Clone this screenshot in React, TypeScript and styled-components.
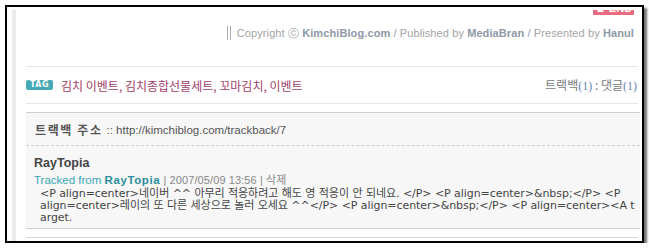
import React from "react";
import styled, { createGlobalStyle } from "styled-components";

const GlobalStyle = createGlobalStyle`
  html, body { margin: 0; padding: 0; background: #fff; }
  body { font-family: "Liberation Sans", "Noto Sans CJK KR", sans-serif; }
`;

const Frame = styled.div`
  box-sizing: border-box;
  margin: 5px 0 0 5px;
  width: 639px;
  height: 238px;
  border: 2px solid #000;
  background: #fff;
  box-shadow: 3px 3px 2px rgba(0, 0, 0, 0.55);
  display: flex;
  padding: 3px 4px 0 5px;
  overflow: hidden;
`;

const Strip = styled.div`
  width: 4px;
  flex: none;
  background: #ebebeb;
`;

const Content = styled.div`
  flex: 1;
  margin-left: 10px;
  display: flex;
  flex-direction: column;
  min-width: 0;
`;

const BadgeRow = styled.div`
  display: flex;
  justify-content: flex-end;
  padding-right: 4px;
  height: 5px;
  overflow: hidden;
  align-items: flex-end;
`;

const EndBadge = styled.div`
  flex: none;
  width: 41px;
  height: 14px;
  background: #e96b80;
  color: #fff;
  font: bold 11px/14px "Liberation Sans", sans-serif;
  text-align: center;
  border-radius: 1px;
`;

const CopyRow = styled.div`
  margin-top: 11px;
  height: 14px;
  display: flex;
  justify-content: flex-end;
  align-items: center;
  padding-right: 4px;
  font: 11px "Liberation Sans", sans-serif;
  letter-spacing: 0.1px;
  color: #a3a3a3;
  white-space: nowrap;
`;

const Bars = styled.span`
  width: 4px;
  height: 14px;
  border-left: 1px solid #aaa;
  border-right: 1px solid #aaa;
  box-sizing: border-box;
  margin-right: 6px;
`;

const Strong = styled.b`
  color: #8e98a6;
  font-weight: bold;
`;

const Slash = styled.span`
  color: #8ea0bb;
`;

const Divider = styled.div<{ $color?: string; $gap?: number }>`
  height: 1px;
  flex: none;
  margin-top: ${(p) => p.$gap || 0}px;
  background: ${(p) => p.$color || "#e8e8e8"};
`;

const TagRow = styled.div`
  height: 36px;
  display: flex;
  align-items: center;
  justify-content: space-between;
  padding-right: 1px;
`;

const TagLeft = styled.div`
  display: flex;
  align-items: center;
`;

const TagBadge = styled.span`
  width: 27px;
  height: 10px;
  background: #45a9b6;
  color: #fff;
  font: bold 8px/10px "DejaVu Sans", sans-serif;
  letter-spacing: 0.5px;
  text-align: center;
  border-radius: 2px;
  margin-right: 8px;
`;

const TagText = styled.span`
  font: 12px "Noto Sans CJK KR", sans-serif;
  color: #a0406a;
`;

const Counts = styled.span`
  font: 12px "Noto Sans CJK KR", sans-serif;
  color: #7a7a7a;
`;

const Num = styled.span`
  font-family: "Liberation Serif", serif;
  color: #6a86b8;
`;

const Box = styled.div`
  margin-top: 8px;
  border-top: 1px solid #cfcfcf;
  border-bottom: 1px solid #cfcfcf;
  background: #f7f7f7;
  margin-right: -2px;
`;

const BoxHead = styled.div`
  border-bottom: 1px dashed #cdcdcd;
  display: flex;
  align-items: center;
  padding-left: 9px;
  padding-top: 1px;
  box-sizing: border-box;
  height: 33px;
`;

const HeadLabel = styled.b`
  font: bold 12px "Noto Sans CJK KR", sans-serif;
  color: #555;
  letter-spacing: 1.6px;
`;

const HeadUrl = styled.span`
  font: 11.5px "Liberation Sans", sans-serif;
  color: #555;
  margin-left: 4px;
`;

const Comment = styled.div`
  padding: 9px 0 8px 8px;
  height: 82px;
  box-sizing: border-box;
`;

const Author = styled.div`
  font: bold 12.5px/16px "Liberation Sans", sans-serif;
  color: #444;
`;

const Meta = styled.div`
  font: 11.5px/15px "Liberation Sans", "Noto Sans CJK KR", sans-serif;
  color: #3aa6b6;
  white-space: nowrap;
`;

const MetaName = styled.b`
  color: #2b8e9e;
  font-weight: bold;
  letter-spacing: 0.6px;
`;

const MetaInfo = styled.span`
  font: 11px "Liberation Sans", "Noto Sans CJK KR", sans-serif;
  color: #888;
  letter-spacing: 0.1px;
`;

const Body = styled.div`
  padding-left: 6px;
  font: 11px/12px "DejaVu Sans", "Noto Sans CJK KR", sans-serif;
  letter-spacing: -0.06px;
  color: #444;
  white-space: nowrap;
`;

const Line = styled.div`
  height: 12px;
  line-height: 12px;
`;

export default function App() {
  return (
    <>
      <GlobalStyle />
      <Frame>
        <Strip />
        <Content>
          <BadgeRow>
            <EndBadge>▲ END</EndBadge>
          </BadgeRow>
          <CopyRow>
            <Bars />
            Copyright ⓒ&nbsp;<Strong>KimchiBlog.com</Strong>&nbsp;<Slash>/</Slash>&nbsp;Published by&nbsp;
            <Strong>MediaBran</Strong>&nbsp;<Slash>/</Slash>&nbsp;Presented by&nbsp;<Strong>Hanul</Strong>
          </CopyRow>
          <Divider $gap={26} />
          <TagRow>
            <TagLeft>
              <TagBadge>TAG</TagBadge>
              <TagText>김치 이벤트, 김치종합선물세트, 꼬마김치, 이벤트</TagText>
            </TagLeft>
            <Counts>
              트랙백<Num>(1)</Num> : 댓글<Num>(1)</Num>
            </Counts>
          </TagRow>
          <Divider />
          <Box>
            <BoxHead>
              <HeadLabel>트랙백 주소</HeadLabel>
              <HeadUrl>:: http://kimchiblog.com/trackback/7</HeadUrl>
            </BoxHead>
            <Comment>
              <Author>RayTopia</Author>
              <Meta>
                Tracked from <MetaName>RayTopia</MetaName>{" "}
                <MetaInfo>| 2007/05/09 13:56 | 삭제</MetaInfo>
              </Meta>
              <Body>
                <Line>
                  {"<P align=center>네이버 ^^ 아무리 적응하려고 해도 영 적응이 안 되네요. </P> <P align=center>&nbsp;</P> <P"}
                </Line>
                <Line>
                  {"align=center>레이의 또 다른 세상으로 놀러 오세요 ^^</P> <P align=center>&nbsp;</P> <P align=center><A t"}
                </Line>
                <Line>arget.</Line>
              </Body>
            </Comment>
          </Box>
          <Divider $color="#d8d8d8" $gap={8} />
        </Content>
      </Frame>
    </>
  );
}
